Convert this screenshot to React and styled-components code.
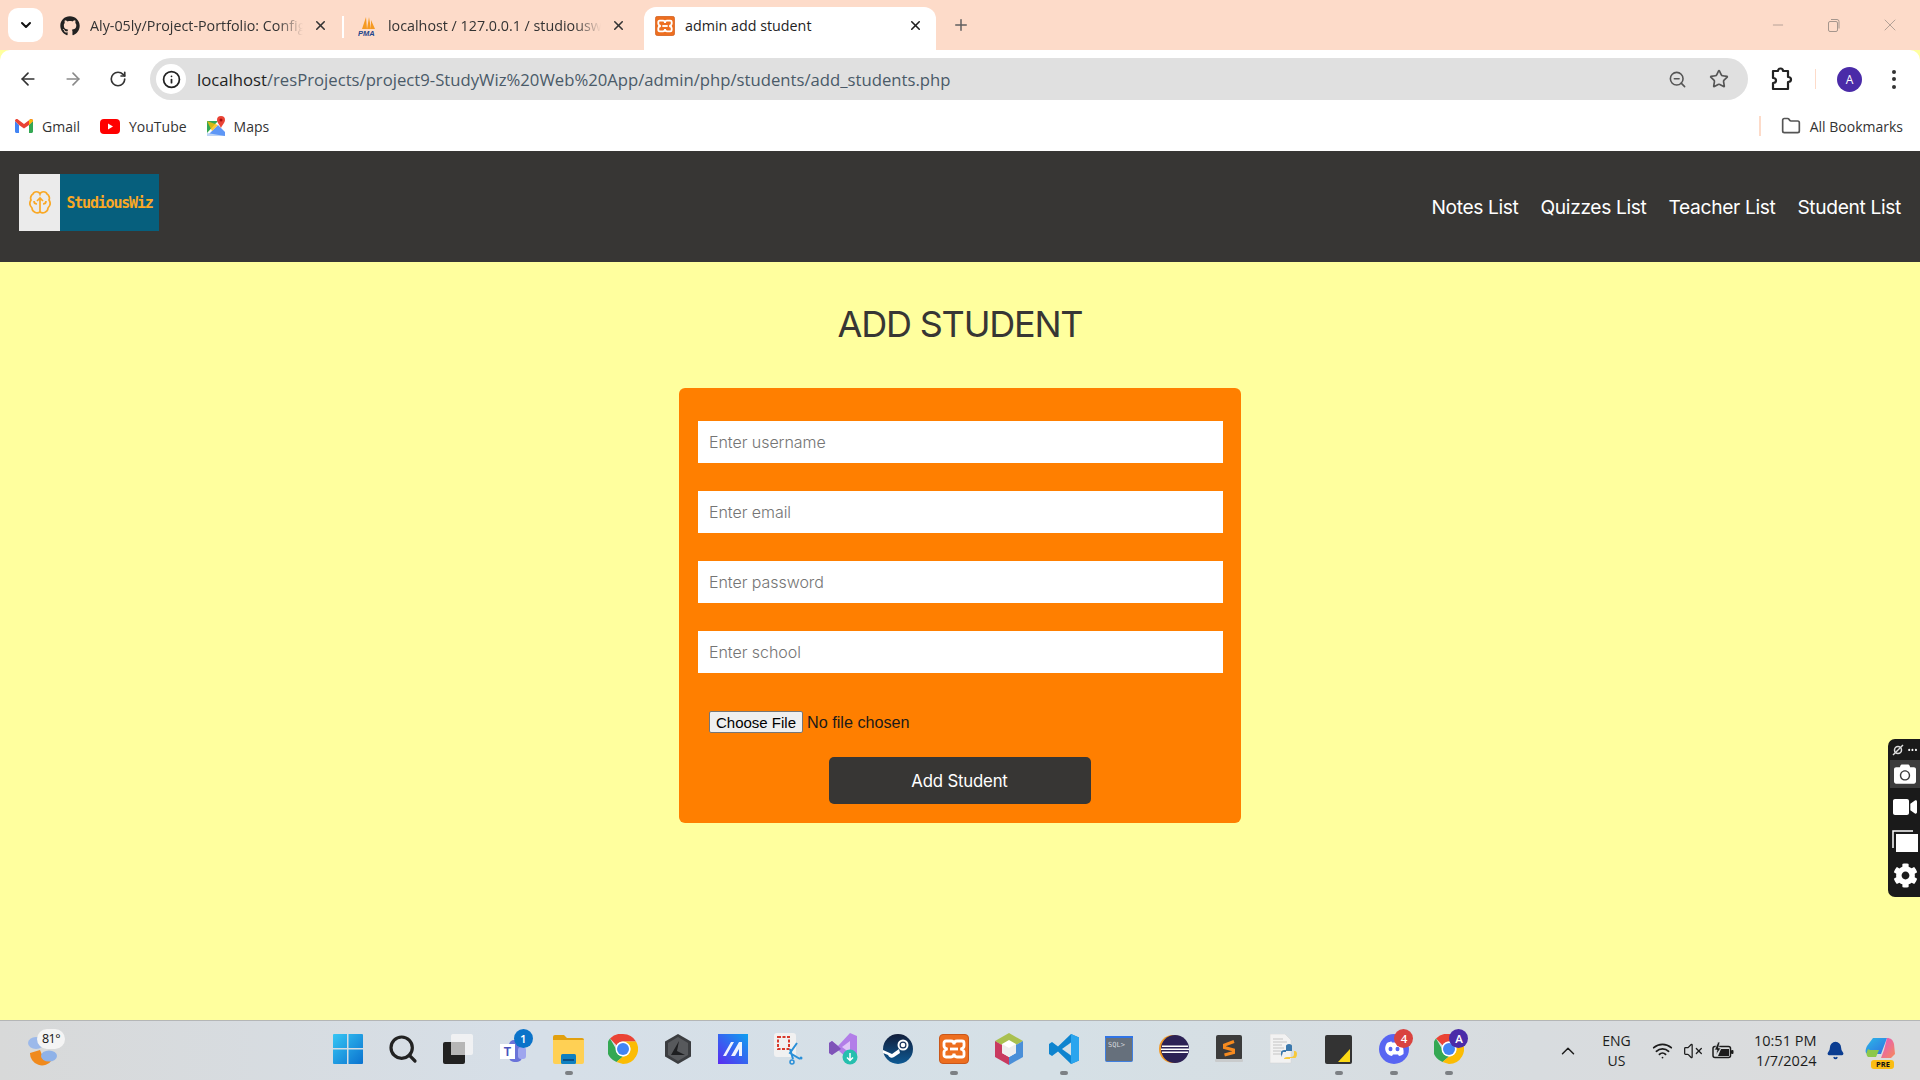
import styled, { createGlobalStyle, css } from 'styled-components';
import {
  ArrowLeft, ArrowRight, RotateCw, Star, ZoomOut, Folder, X, Plus, Minus,
  ChevronDown, ChevronUp, Wifi, VolumeX, Bell, Info, Search,
} from 'lucide-react';
import { FaGithub, FaCog, FaVideo, FaCamera } from 'react-icons/fa';

const GlobalStyle = createGlobalStyle`
  html, body { margin: 0; padding: 0; height: 100%; overflow: hidden; }
  * { box-sizing: border-box; }
`;

const Page = styled.div`
  width: 1920px;
  height: 1080px;
  display: flex;
  flex-direction: column;
  font-family: "Open Sans", "Liberation Sans", sans-serif;
  background: #ffff9e;
`;

/* ---------- browser chrome ---------- */
const TabStrip = styled.div`
  height: 50px;
  background: #fddbc9;
  display: flex;
  align-items: flex-end;
  padding-left: 8px;
`;

const TabMenu = styled.button`
  width: 35px;
  height: 34px;
  margin: 0 3px 8px 0;
  border: none;
  border-radius: 10px;
  background: #fff;
  color: #111;
  padding: 0;
  display: flex;
  align-items: center;
  justify-content: center;
`;

const Tab = styled.div`
  width: ${p => p.$w}px;
  height: 43px;
  display: flex;
  align-items: center;
  padding: 0 ${p => (p.$active ? 13 : 16)}px 6px ${p => (p.$active ? 11 : 14)}px;
  gap: 10px;
  position: relative;
  color: #333;
  ${p => p.$active && css`
    background: #fff;
    border-radius: 12px 12px 0 0;
    color: #1f1f1f;
    margin-left: 2px;
  `}
  ${p => p.$sep && css`
    &::after {
      content: '';
      position: absolute;
      right: 0;
      top: 9px;
      height: 22px;
      width: 2px;
      background: #fff;
    }
  `}
`;

const TabIcon = styled.span`
  width: 20px;
  height: 20px;
  flex: none;
  display: flex;
  align-items: center;
  justify-content: center;
`;

const TabTitle = styled.span`
  flex: 1;
  min-width: 0;
  font-size: 14.3px;
  white-space: nowrap;
  overflow: hidden;
  ${p => p.$fade && css`
    mask-image: linear-gradient(90deg, #000 88%, transparent 100%);
  `}
`;

const NewTab = styled.div`
  margin: 0 0 9px 16px;
  height: 32px;
  display: flex;
  align-items: center;
  color: #5f5f5f;
`;

const WindowControls = styled.div`
  margin-left: auto;
  align-self: flex-start;
  height: 50px;
  display: flex;
  align-items: center;
  color: #a5968d;
  padding-right: 2px;
`;

const WindowButton = styled.span`
  width: 56px;
  display: flex;
  justify-content: center;
`;

const Toolbar = styled.div`
  height: 58px;
  background: #fff;
  border-radius: 10px 10px 0 0;
  display: flex;
  align-items: center;
  padding: 0 0 0 5px;
`;

const NavIcon = styled.span`
  width: 45px;
  display: flex;
  justify-content: center;
  color: ${p => (p.$dim ? '#8a8a8a' : '#333')};
`;

const AddressBar = styled.div`
  width: 1598px;
  height: 42px;
  margin-left: 10px;
  border-radius: 21px;
  background: #e0e0e0;
  display: flex;
  align-items: center;
  padding: 0 19px 0 6px;
`;

const SiteInfo = styled.span`
  width: 30px;
  height: 30px;
  border-radius: 50%;
  background: #fff;
  flex: none;
  display: flex;
  align-items: center;
  justify-content: center;
  color: #222;
  margin-right: 11px;
`;

const Url = styled.span`
  font-size: 16.7px;
  color: #4a5a68;
  white-space: nowrap;
  flex: 1;
  b { font-weight: 400; color: #1f1f1f; }
`;

const AddressAction = styled.span`
  display: flex;
  margin-left: 22px;
  color: #555;
`;

const ToolbarRight = styled.div`
  flex: 1;
  display: flex;
  align-items: center;
  padding-left: 21px;
`;

const ToolbarSep = styled.span`
  width: 1px;
  height: 20px;
  background: #fddbc9;
  margin: 0 21px 0 22px;
`;

const Avatar = styled.span`
  width: 25px;
  height: 25px;
  border-radius: 50%;
  background: #4a2ba8;
  color: #fff;
  font-size: 12px;
  display: flex;
  align-items: center;
  justify-content: center;
`;

const MenuDots = styled.span`
  margin-left: 30px;
  display: flex;
  flex-direction: column;
  gap: 3.5px;
  i { width: 4px; height: 4px; border-radius: 50%; background: #333; display: block; }
`;

const BookmarkBar = styled.div`
  height: 43px;
  background: #fff;
  display: flex;
  align-items: center;
  padding: 0 17px 7px 15px;
`;

const Bookmark = styled.span`
  display: flex;
  align-items: center;
  gap: 9px;
  font-size: 14px;
  color: #333;
  margin-right: ${p => (p.$last ? 0 : 20)}px;
`;

const BookmarkSep = styled.span`
  width: 2px;
  height: 20px;
  background: #fddbc9;
  margin: 0 20px 0 auto;
`;

/* ---------- site ---------- */
const SiteNav = styled.header`
  height: 111px;
  background: #373634;
  display: flex;
  justify-content: space-between;
  padding: 23px 19px 0;
`;

const Logo = styled.div`
  width: 140px;
  height: 57px;
  display: flex;
  background: #065f7d;
`;

const LogoMark = styled.div`
  width: 41px;
  background: #ebebeb;
  display: flex;
  align-items: center;
  justify-content: center;
`;

const LogoText = styled.div`
  flex: 1;
  display: flex;
  align-items: center;
  justify-content: center;
  color: #f9a825;
  font-family: "DejaVu Sans Mono", "Liberation Mono", monospace;
  font-size: 15px;
  font-weight: 700;
  letter-spacing: -1.2px;
`;

const NavLinks = styled.nav`
  display: flex;
  gap: 22px;
  height: 60px;
  padding-top: 20px;
`;

const NavLink = styled.a`
  color: #fff;
  font-family: Inter, sans-serif;
  font-size: 19.2px;
  line-height: 26px;
  font-weight: 400;
  letter-spacing: -0.35px;
`;

const Main = styled.main`
  flex: 1;
  background: #ffff9e;
  display: flex;
  flex-direction: column;
  align-items: center;
  padding-top: 38px;
`;

const Heading = styled.h1`
  margin: 0 0 38px;
  height: 50px;
  line-height: 48px;
  font-family: Inter, sans-serif;
  font-size: 36px;
  font-weight: 400;
  letter-spacing: -1.2px;
  color: #373634;
`;

const Card = styled.form`
  width: 562px;
  height: 435px;
  background: #ff7f00;
  border-radius: 6px;
  padding: 33px 18px 19px 19px;
  display: flex;
  flex-direction: column;
`;

const TextInput = styled.input`
  height: 42px;
  flex: none;
  margin-bottom: 28px;
  border: none;
  outline: none;
  background: #fff;
  padding: 0 11px;
  font-family: Inter, sans-serif;
  font-size: 16px;
  font-weight: 300;
  letter-spacing: -0.05px;
  &::placeholder { color: #757575; opacity: 1; }
`;

const FileInput = styled.input`
  margin: 10px 0 24px 11px;
  height: 22px;
  font-family: "Liberation Sans", Arial, sans-serif;
  font-size: 16.2px;
  color: #1a1a1a;
  &::file-selector-button {
    font-family: "Liberation Sans", Arial, sans-serif;
    font-size: 15px;
    height: 22px;
    padding: 0 6px;
    margin-right: 4px;
    background: #efefef;
    border: 1px solid #767676;
    border-radius: 2px;
    color: #000;
  }
`;

const SubmitButton = styled.button`
  width: 262px;
  height: 48px;
  align-self: center;
  margin-right: 2px;
  border: none;
  border-radius: 5px;
  background: #373634;
  color: #fff;
  font-family: Inter, sans-serif;
  font-size: 16.8px;
  font-weight: 400;
  letter-spacing: -0.2px;
`;

/* ---------- screenshot widget ---------- */
const CaptureDock = styled.div`
  position: fixed;
  right: 0;
  top: 739px;
  width: 32px;
  height: 158px;
  background: #1a1a1a;
  border-radius: 7px 0 0 7px;
  display: flex;
  flex-direction: column;
  align-items: center;
  color: #fff;
  padding-left: 2px;
`;

const DockTop = styled.div`
  height: 21px;
  width: 100%;
  display: flex;
  align-items: center;
  justify-content: center;
  gap: 3px;
  font-size: 9px;
  letter-spacing: 0;
`;

const DockItem = styled.div`
  width: 100%;
  height: ${p => (p.$h ? p.$h : 33)}px;
  display: flex;
  align-items: center;
  justify-content: center;
  background: ${p => (p.$on ? '#3d3d3d' : 'transparent')};
`;

/* ---------- taskbar ---------- */
const Taskbar = styled.footer`
  height: 60px;
  border-top: 1px solid #b4b6b6;
  background: linear-gradient(90deg, #d8d9d9 0%, #d6dfe8 28%, #d5e0e6 55%, #d8dcdf 80%, #dcdcdc 100%);
  display: flex;
  align-items: center;
`;

const Weather = styled.div`
  width: 320.5px;
  height: 100%;
  position: relative;
  padding: 10px 0 0 25px;
  flex: none;
`;

const WeatherBadge = styled.span`
  position: absolute;
  left: 37px;
  top: 8px;
  width: 28px;
  height: 20px;
  border-radius: 10px;
  background: #f4f4f4;
  font-size: 12.5px;
  color: #111;
  text-align: center;
  line-height: 19px;
  letter-spacing: -0.5px;
`;

const Apps = styled.div`
  display: flex;
  height: 100%;
`;

const AppSlot = styled.div`
  width: 55.05px;
  height: 100%;
  position: relative;
  display: flex;
  align-items: center;
  justify-content: center;
  padding-bottom: 3px;
  ${p => p.$running && css`
    &::after {
      content: '';
      position: absolute;
      left: 24px;
      bottom: 5px;
      width: 8px;
      height: 4px;
      border-radius: 2px;
      background: #7c8084;
    }
  `}
`;

const AppBadge = styled.span`
  position: absolute;
  top: 8px;
  right: 8px;
  width: 19px;
  height: 19px;
  border-radius: 50%;
  background: ${p => p.$bg};
  color: #fff;
  font-size: 11.5px;
  font-weight: 600;
  text-align: center;
  line-height: 19px;
`;

const Tray = styled.div`
  flex: 1;
  display: flex;
  align-items: center;
  height: 100%;
  color: #1c1c1c;
  padding-left: 81px;
`;

const LangBlock = styled.div`
  width: 40px;
  margin-left: 17px;
  text-align: center;
  font-size: 14px;
  line-height: 20px;
`;

const TrayIcons = styled.div`
  display: flex;
  align-items: center;
  gap: 9.5px;
  margin-left: 16px;
`;

const Clock = styled.div`
  margin-left: 7px;
  width: 75px;
  text-align: right;
  font-size: 14.5px;
  line-height: 20px;
  white-space: nowrap;
`;

const BellWrap = styled.span`
  display: flex;
  margin-left: 10px;
  color: #0b3d91;
`;

const Copilot = styled.div`
  position: relative;
  margin-left: 20px;
  width: 30px;
  height: 30px;
`;

const PreTag = styled.span`
  position: absolute;
  left: 6px;
  bottom: -3px;
  width: 23px;
  height: 9px;
  background: #fbbd12;
  border-radius: 3px;
  font-size: 7.5px;
  font-weight: 700;
  line-height: 9px;
  text-align: center;
  color: #111;
`;

/* ---------- drawings ---------- */
const XamppIcon = ({ size = 20 }) => (
  <svg width={size} height={size} viewBox="0 0 30 30">
    <rect x="0.5" y="0.5" width="29" height="29" rx="3.5" fill="#ed6e1f" stroke="#c9571a" />
    <path
      d="M7 7h5c2 0 3 1.500 3 3.500C15 8.500 16 7 18 7h5c1.500 0 2 1 2 2v3c0 1.500-1.500 2.500-3.500 3 2 .5 3.500 1.500 3.500 3v3c0 1-.5 2-2 2h-5c-2 0-3-1.500-3-3.500 0 2-1 3.500-3 3.500H7c-1.500 0-2-1-2-2v-3c0-1.500 1.500-2.500 3.500-3C6.500 14.500 5 13.500 5 12V9c0-1 .5-2 2-2z"
      fill="none" stroke="#fff" strokeWidth="2.8"
    />
    <path d="M11 15h8" stroke="#fff" strokeWidth="2.8" />
  </svg>
);

const PmaIcon = () => (
  <svg width="20" height="20" viewBox="0 0 20 20">
    <path d="M4 13 8 1l1 12zM9 13 11 1l2 12zM13 13 13 4l4 9z" fill="#f59a23" />
    <text x="0" y="19.500" fontFamily="Liberation Sans" fontSize="7.500" fontWeight="700" fontStyle="italic" fill="#23468c">PMA</text>
  </svg>
);

const GmailIcon = () => (
  <svg width="18" height="14" viewBox="0 0 18 14">
    <path d="M0 2v10.500C0 13.300.7 14 1.500 14H4V6z" fill="#4285f4" />
    <path d="M14 6v8h2.500c.8 0 1.500-.7 1.500-1.500V2z" fill="#34a853" />
    <path d="M0 2c0-2 2-2.500 3-1.500L9 5l6-4.500c1-1 3-.5 3 1.500l-4 4-5 3.500L4 6z" fill="#ea4335" />
    <path d="M14 1v5l4-4c0-2-2-2.500-4-1z" fill="#fbbc04" />
  </svg>
);

const YoutubeIcon = () => (
  <svg width="20" height="15" viewBox="0 0 20 15">
    <rect width="20" height="15" rx="4" fill="#f00" />
    <path d="M8 4.500v6l5-3z" fill="#fff" />
  </svg>
);

const MapsIcon = () => (
  <svg width="18" height="20" viewBox="0 0 18 20">
    <path d="M0 5h11L0 17z" fill="#34a853" />
    <path d="M0 20 11 9l7 7v4z" fill="#4285f4" opacity=".85" />
    <path d="M0 17v3h18z" fill="#bcd4f5" />
    <path d="M11 9 5 15l0 0L0 5z" fill="#fbbc04" opacity=".8" />
    <path d="M14 0a4 4 0 0 1 4 4c0 3-3 5-4 8-1-3-4-5-4-8a4 4 0 0 1 4-4z" fill="#ea4335" />
    <circle cx="14" cy="4" r="1.500" fill="#a50e0e" />
  </svg>
);

const ExtensionIcon = () => (
  <svg width="24" height="26" viewBox="0 0 24 26" fill="none" stroke="#222" strokeWidth="2.200" strokeLinejoin="round">
    <path d="M4 5h5c0-1.500 1-2.500 2.500-2.500S14 3.500 14 5h5v6c1.800 0 3 1 3 2.500S20.800 16 19 16v7H4v-6c1.800 0 3-1 3-2.500S5.800 12 4 12z" />
  </svg>
);

const BrainIcon = () => (
  <svg width="22" height="28" viewBox="0 0 22 28" fill="none" stroke="#f9a825" strokeWidth="1.700">
    <path d="M11 5c-1-3-6-3-7 0-2 1-3 4-2 6-2 3-1 6 1 8 0 4 5 6 8 4 3 2 8 0 8-4 2-2 3-5 1-8 1-2 0-5-2-6-1-3-6-3-7 0z" />
    <path d="M11 9v15M8 12l3-3 3 3M5 12c0 2 1 3 3 3M17 12c0 2-1 3-3 3" />
  </svg>
);

const WeatherIcon = () => (
  <svg width="36" height="36" viewBox="0 0 36 36">
    <ellipse cx="11" cy="12" rx="8" ry="6" fill="#9cb9ea" />
    <path d="M5 22a12 12 0 0 0 22 7A13 13 0 0 1 15 19z" fill="#f08a1d" />
    <ellipse cx="24" cy="25" rx="8" ry="5.500" fill="#8fb2e8" />
  </svg>
);

const WindowsIcon = () => (
  <svg width="30" height="30" viewBox="0 0 30 30">
    <defs>
      <linearGradient id="win" x1="0" y1="0" x2="1" y2="1">
        <stop offset="0" stopColor="#37c6f4" />
        <stop offset="1" stopColor="#0a72cf" />
      </linearGradient>
    </defs>
    <path d="M0 1a1 1 0 0 1 1-1h13v14H0zM15.500 0H29a1 1 0 0 1 1 1v13H15.500zM0 15.500h14V30H1a1 1 0 0 1-1-1zM15.500 15.500H30V29a1 1 0 0 1-1 1H15.500z" fill="url(#win)" />
  </svg>
);

const TaskViewIcon = () => (
  <svg width="30" height="30" viewBox="0 0 30 30">
    <rect x="8" y="0" width="22" height="21" rx="2" fill="#f4f4f4" opacity=".85" />
    <rect x="0" y="8" width="22" height="22" rx="2" fill="#222" />
    <rect x="8" y="8" width="14" height="13" fill="#b6b6b6" />
  </svg>
);

const TeamsIcon = () => (
  <svg width="30" height="30" viewBox="0 0 30 30">
    <circle cx="23" cy="9" r="4" fill="#7b83eb" />
    <rect x="11" y="6" width="13" height="22" rx="5" fill="#6a73d9" />
    <rect x="20" y="13" width="8" height="12" rx="3" fill="#9ea5ee" />
    <rect x="2" y="10" width="15" height="15" fill="#fff" />
    <text x="9.500" y="22" textAnchor="middle" fontFamily="Liberation Sans" fontWeight="700" fontSize="12" fill="#4b53bc">T</text>
  </svg>
);

const FilesIcon = () => (
  <svg width="31" height="30" viewBox="0 0 31 30">
    <path d="M0 3a2 2 0 0 1 2-2h9l3 3h15a2 2 0 0 1 2 2v4H0z" fill="#e2a00e" />
    <path d="M0 6h31v22a2 2 0 0 1-2 2H2a2 2 0 0 1-2-2z" fill="#ffd054" />
    <rect x="8" y="20" width="15" height="10" rx="1.500" fill="#0f80c1" />
    <rect x="10" y="25" width="11" height="2" fill="#0a4f85" />
  </svg>
);

const ChromeIcon = () => (
  <svg width="30" height="30" viewBox="0 0 30 30">
    <path d="M15 0a15 15 0 0 1 13 7.500H15a7.500 7.500 0 0 0-6.500 3.750L2 4.500A15 15 0 0 1 15 0z" fill="#ea4335" />
    <path d="M2 4.500l6.500 11.250A7.500 7.500 0 0 0 15 22.500L8.500 28A15 15 0 0 1 2 4.500z" fill="#34a853" />
    <path d="M28 7.500A15 15 0 0 1 15 30l-6.500-2 6.500-5.500a7.500 7.500 0 0 0 6.500-11.250L15 7.500z" fill="#fbbc04" />
    <circle cx="15" cy="15" r="7.500" fill="#fff" />
    <circle cx="15" cy="15" r="6" fill="#4285f4" />
  </svg>
);

const HexIcon = () => (
  <svg width="26" height="30" viewBox="0 0 26 30">
    <path d="M13 0l13 7.500v15L13 30 0 22.500v-15z" fill="#3b3d40" />
    <path d="M13 3l10 6v12l-10 6-10-6V9z" fill="#57595c" />
    <path d="M14 7 6 21h14l-8-4z" fill="#1e1f21" />
  </svg>
);

const MarkIcon = () => (
  <svg width="30" height="30" viewBox="0 0 30 30">
    <defs>
      <linearGradient id="mk" x1="1" y1="0" x2="0" y2="1">
        <stop offset="0" stopColor="#0ea0f0" />
        <stop offset="1" stopColor="#5a2bf0" />
      </linearGradient>
    </defs>
    <rect width="30" height="30" fill="url(#mk)" />
    <path d="M5 22 13 8h3L8 22zM13 22 21 8h3v14h-3v-7l-4 7z" fill="#fff" opacity=".92" />
  </svg>
);

const SnipIcon = () => (
  <svg width="30" height="32" viewBox="0 0 30 32">
    <rect x="1" y="0" width="22" height="24" rx="3" fill="#f1f1f1" />
    <rect x="5" y="4" width="11" height="12" fill="none" stroke="#d8392b" strokeWidth="2" strokeDasharray="3 1.500" />
    <path d="M24 10 17 20l10 6M17 16l3 10" stroke="#2a8fd8" strokeWidth="2" fill="none" />
    <circle cx="19" cy="29" r="2" fill="none" stroke="#2a8fd8" strokeWidth="1.500" />
    <circle cx="28" cy="25" r="1.500" fill="#2a8fd8" />
  </svg>
);

const VsIcon = () => (
  <svg width="30" height="32" viewBox="0 0 30 32">
    <path d="M22 0 29 3v22l-7 3-12-11-6 5-3-2V10l3-2 6 5z" fill="#b27ee8" />
    <path d="M22 8v12l-8-6z" fill="#e0c6f8" />
    <path d="M1 10l3-2 6 5 3 3-3 2-6 4-3-2z" fill="#7f54b8" />
    <circle cx="22" cy="24" r="7.500" fill="#26bfae" />
    <path d="M22 20v7M19 24.500l3 3 3-3" stroke="#fff" strokeWidth="1.500" fill="none" />
  </svg>
);

const SteamIcon = () => (
  <svg width="30" height="30" viewBox="0 0 30 30">
    <defs>
      <linearGradient id="st" x1="0" y1="0" x2="0" y2="1">
        <stop offset="0" stopColor="#111d3a" />
        <stop offset="1" stopColor="#0e5a94" />
      </linearGradient>
    </defs>
    <circle cx="15" cy="15" r="15" fill="url(#st)" />
    <circle cx="20" cy="11" r="5.500" fill="#fff" />
    <circle cx="20" cy="11" r="3.500" fill="#16305a" />
    <circle cx="20" cy="11" r="2.300" fill="#fff" />
    <path d="M0 16l9 4 7-5 1 4-6 4a4 4 0 0 1-6-2L0 19z" fill="#fff" />
  </svg>
);

const NetbeansIcon = () => (
  <svg width="28" height="32" viewBox="0 0 28 32">
    <path d="M14 0l14 8-14 8L0 8z" fill="#a9c04f" />
    <path d="M0 8l14 8v16L0 24z" fill="#c93a5f" />
    <path d="M28 8 14 16v16l14-8z" fill="#4a8fd8" />
    <path d="M14 7l7 4v9l-7 4-7-4v-9z" fill="#fff" />
    <path d="M7 11l7 4 7-4v9l-7 4-7-4z" fill="#eee" />
  </svg>
);

const VscodeIcon = () => (
  <svg width="30" height="30" viewBox="0 0 30 30">
    <path d="M22 0 30 3.500v23L22 30 9 17.500 3 22l-3-2v-10l3-2 6 4.500z" fill="#0e84cf" />
    <path d="M22 0l8 3.500v23L22 30z" fill="#2aa5ee" />
    <path d="M22 8.500 13 15l9 6.500z" fill="#d5e0e6" />
  </svg>
);

const SqlIcon = () => (
  <svg width="28" height="26" viewBox="0 0 28 26">
    <rect x="0.500" y="0.500" width="27" height="25" rx="1" fill="#66707c" stroke="#3f7fe0" />
    <rect x="0" y="0" width="28" height="2" fill="#2f74e6" />
    <text x="3" y="11" fontFamily="DejaVu Sans Mono" fontSize="7" fill="#d5d8dc">SQL&gt;</text>
  </svg>
);

const EclipseIcon = () => (
  <svg width="30" height="30" viewBox="0 0 30 30">
    <circle cx="14" cy="15" r="14" fill="#f39a24" />
    <circle cx="16" cy="15" r="14" fill="#2c2255" />
    <path d="M3 11.500h26v1.500H3zM2 14.500h28v1.500H2zM3 17.500h26v1.500H3z" fill="#fff" />
  </svg>
);

const SublimeIcon = () => (
  <svg width="28" height="28" viewBox="0 0 28 28">
    <rect x="1" y="0" width="26" height="25" rx="2" fill="#3b3b3b" />
    <rect x="0" y="24" width="28" height="3" rx="1" fill="#c9cbcc" />
    <path d="M19 6.500 9.500 10v2.500L18.500 15v2.500L9.500 20" fill="none" stroke="#f58a1f" strokeWidth="3" />
  </svg>
);

const PythonFileIcon = () => (
  <svg width="28" height="30" viewBox="0 0 28 30">
    <path d="M0 0h15l6 6v23H0z" fill="#f2f2f2" stroke="#d0d0d0" strokeWidth=".5" />
    <path d="M3 5h10M3 8h14M3 11h9M3 14h11M3 17h8M3 20h10" stroke="#c4c4c4" />
    <path d="M14 22v-4c0-3 2-3 5-3V11c0-1 1-2 3-2s3 1 3 2v5h-6v1h-3z" fill="#3a78ad" transform="translate(-3 1)" />
    <path d="M14 23h6v-1h5c1 0 2-2 2-4s-1-3-2-3h-1v3c0 2-1 3-3 3h-4c-2 0-3 1-3 2z" fill="#f7c93c" transform="translate(0 2)" />
  </svg>
);

const StickyIcon = () => (
  <svg width="27" height="29" viewBox="0 0 27 29">
    <rect width="27" height="29" rx="2" fill="#333" />
    <path d="M13 27 25 14v13z" fill="#fbd916" />
  </svg>
);

const DiscordIcon = () => (
  <svg width="30" height="30" viewBox="0 0 30 30">
    <circle cx="15" cy="15" r="15" fill="#5865f2" />
    <path d="M8 9c2-1 4-1.500 4.500-1.500l.5 1h4l.5-1c.5 0 2.500.5 4.500 1.500 2 3 3 7 2.500 11-1.500 1.200-3.500 2-4.500 2l-1-1.500-5 0-1 1.500c-1 0-3-.8-4.500-2C5 16 6 12 8 9z" fill="#fff" />
    <ellipse cx="11.500" cy="15" rx="2" ry="2.300" fill="#5865f2" />
    <ellipse cx="18.500" cy="15" rx="2" ry="2.300" fill="#5865f2" />
  </svg>
);

const BatteryIcon = () => (
  <svg width="22" height="18" viewBox="0 0 22 18">
    <rect x="1" y="4.500" width="17.500" height="11" rx="2" fill="none" stroke="#1c1c1c" strokeWidth="1.500" />
    <path d="M3 14h14V7H9l-3 7z" fill="#1c1c1c" />
    <rect x="19" y="8" width="2.500" height="4" rx="1" fill="#1c1c1c" />
    <path d="M6 0 2.500 8H5l-1 5 5-7H6.500L8 0z" fill="#1c1c1c" stroke="#d8dcdf" strokeWidth=".7" />
  </svg>
);

const CopilotIcon = () => (
  <svg width="30" height="28" viewBox="0 0 30 28">
    <defs>
      <linearGradient id="cpa" x1="0" y1="0" x2="1" y2="1">
        <stop offset="0" stopColor="#2bb8e8" />
        <stop offset="1" stopColor="#2f6fe0" />
      </linearGradient>
      <linearGradient id="cpb" x1="0" y1="0" x2="1" y2="1">
        <stop offset="0" stopColor="#e255c8" />
        <stop offset="1" stopColor="#f78a5a" />
      </linearGradient>
    </defs>
    <path d="M8 2h14l-6 16H3C0 18 0 14 2 10z" fill="url(#cpa)" />
    <path d="M3 13c-2 4-2 6 0 8h8l3-7H5z" fill="#8cc84b" />
    <path d="M22 2c4 0 6 2 7 6l1 10-4 4H16l3-8z" fill="url(#cpb)" />
  </svg>
);

const apps = [
  { key: 'win', icon: <WindowsIcon /> },
  { key: 'search', icon: <Search size={32} color="#222" strokeWidth={2.4} /> },
  { key: 'taskview', icon: <TaskViewIcon /> },
  { key: 'teams', icon: <TeamsIcon />, badge: '1', badgeBg: '#0b73c9' },
  { key: 'files', icon: <FilesIcon />, running: true },
  { key: 'chrome', icon: <ChromeIcon /> },
  { key: 'hex', icon: <HexIcon /> },
  { key: 'mark', icon: <MarkIcon /> },
  { key: 'snip', icon: <SnipIcon /> },
  { key: 'vs', icon: <VsIcon /> },
  { key: 'steam', icon: <SteamIcon /> },
  { key: 'xampp', icon: <XamppIcon size={30} />, running: true },
  { key: 'netbeans', icon: <NetbeansIcon /> },
  { key: 'vscode', icon: <VscodeIcon />, running: true },
  { key: 'sql', icon: <SqlIcon /> },
  { key: 'eclipse', icon: <EclipseIcon /> },
  { key: 'sublime', icon: <SublimeIcon /> },
  { key: 'python', icon: <PythonFileIcon /> },
  { key: 'sticky', icon: <StickyIcon />, running: true },
  { key: 'discord', icon: <DiscordIcon />, running: true, badge: '4', badgeBg: '#d9433f' },
  { key: 'chrome2', icon: <ChromeIcon />, running: true, badge: 'A', badgeBg: '#4a2ba8' },
];

function App() {
  return (
    <Page>
      <GlobalStyle />
      <TabStrip>
        <TabMenu aria-label="Search tabs"><ChevronDown size={16} strokeWidth={3} /></TabMenu>
        <Tab $w={298} $sep>
          <TabIcon><FaGithub size={20} color="#222" /></TabIcon>
          <TabTitle $fade>Aly-05ly/Project-Portfolio: Config files for my GitHub profile</TabTitle>
          <X size={15} strokeWidth={2.5} />
        </Tab>
        <Tab $w={298}>
          <TabIcon><PmaIcon /></TabIcon>
          <TabTitle $fade>localhost / 127.0.0.1 / studiouswiz | phpMyAdmin</TabTitle>
          <X size={15} strokeWidth={2.5} />
        </Tab>
        <Tab $w={292} $active>
          <TabIcon><XamppIcon size={20} /></TabIcon>
          <TabTitle>admin add student</TabTitle>
          <X size={15} strokeWidth={2.5} />
        </Tab>
        <NewTab><Plus size={18} /></NewTab>
        <WindowControls>
          <WindowButton><Minus size={16} strokeWidth={1.2} /></WindowButton>
          <WindowButton>
            <svg width="14" height="14" viewBox="0 0 14 14" fill="none" stroke="currentColor">
              <rect x="1.500" y="3.500" width="9" height="10" rx="1.500" />
              <path d="M4 1.500h6a2 2 0 0 1 2 2v7" />
            </svg>
          </WindowButton>
          <WindowButton><X size={20} strokeWidth={1} /></WindowButton>
        </WindowControls>
      </TabStrip>

      <Toolbar>
        <NavIcon><ArrowLeft size={20} /></NavIcon>
        <NavIcon $dim><ArrowRight size={20} /></NavIcon>
        <NavIcon><RotateCw size={18} strokeWidth={2.2} /></NavIcon>
        <AddressBar>
          <SiteInfo><Info size={19} strokeWidth={2.2} /></SiteInfo>
          <Url><b>localhost</b>/resProjects/project9-StudyWiz%20Web%20App/admin/php/students/add_students.php</Url>
          <AddressAction><ZoomOut size={19} /></AddressAction>
          <AddressAction><Star size={20} /></AddressAction>
        </AddressBar>
        <ToolbarRight>
          <ExtensionIcon />
          <ToolbarSep />
          <Avatar>A</Avatar>
          <MenuDots><i /><i /><i /></MenuDots>
        </ToolbarRight>
      </Toolbar>

      <BookmarkBar>
        <Bookmark><GmailIcon />Gmail</Bookmark>
        <Bookmark><YoutubeIcon />YouTube</Bookmark>
        <Bookmark><MapsIcon />Maps</Bookmark>
        <BookmarkSep />
        <Bookmark $last><Folder size={20} color="#555" />All Bookmarks</Bookmark>
      </BookmarkBar>

      <SiteNav>
        <Logo>
          <LogoMark><BrainIcon /></LogoMark>
          <LogoText>StudiousWiz</LogoText>
        </Logo>
        <NavLinks>
          <NavLink>Notes List</NavLink>
          <NavLink>Quizzes List</NavLink>
          <NavLink>Teacher List</NavLink>
          <NavLink>Student List</NavLink>
        </NavLinks>
      </SiteNav>

      <Main>
        <Heading>ADD STUDENT</Heading>
        <Card onSubmit={e => e.preventDefault()}>
          <TextInput type="text" placeholder="Enter username" />
          <TextInput type="email" placeholder="Enter email" />
          <TextInput type="password" placeholder="Enter password" />
          <TextInput type="text" placeholder="Enter school" />
          <FileInput type="file" />
          <SubmitButton type="submit">Add Student</SubmitButton>
        </Card>
      </Main>

      <CaptureDock>
        <DockTop>
          <svg width="12" height="12" viewBox="0 0 12 12" fill="none" stroke="#ddd" strokeWidth="1.500">
            <circle cx="6" cy="6" r="3.500" />
            <path d="M1 11 11 1" />
          </svg>
          <span>•••</span>
        </DockTop>
        <DockItem $on $h={28}><FaCamera size={22} /></DockItem>
        <DockItem $h={38}><FaVideo size={24} /></DockItem>
        <DockItem $h={30}>
          <svg width="26" height="22" viewBox="0 0 26 22" fill="none">
            <path d="M1 18V1h20" stroke="#fff" strokeWidth="1.500" />
            <rect x="4" y="4" width="22" height="18" fill="#fff" />
          </svg>
        </DockItem>
        <DockItem $h={38}><FaCog size={25} /></DockItem>
      </CaptureDock>

      <Taskbar>
        <Weather>
          <WeatherIcon />
          <WeatherBadge>81°</WeatherBadge>
        </Weather>
        <Apps>
          {apps.map(app => (
            <AppSlot key={app.key} $running={app.running}>
              {app.icon}
              {app.badge && <AppBadge $bg={app.badgeBg}>{app.badge}</AppBadge>}
            </AppSlot>
          ))}
        </Apps>
        <Tray>
          <ChevronUp size={22} strokeWidth={1.6} />
          <LangBlock>ENG<br />US</LangBlock>
          <TrayIcons>
            <Wifi size={21} />
            <VolumeX size={20} strokeWidth={1.5} />
            <BatteryIcon />
          </TrayIcons>
          <Clock>10:51 PM<br />1/7/2024</Clock>
          <BellWrap><Bell size={19} fill="#0b3d91" /></BellWrap>
          <Copilot>
            <CopilotIcon />
            <PreTag>PRE</PreTag>
          </Copilot>
        </Tray>
      </Taskbar>
    </Page>
  );
}

export default App;
